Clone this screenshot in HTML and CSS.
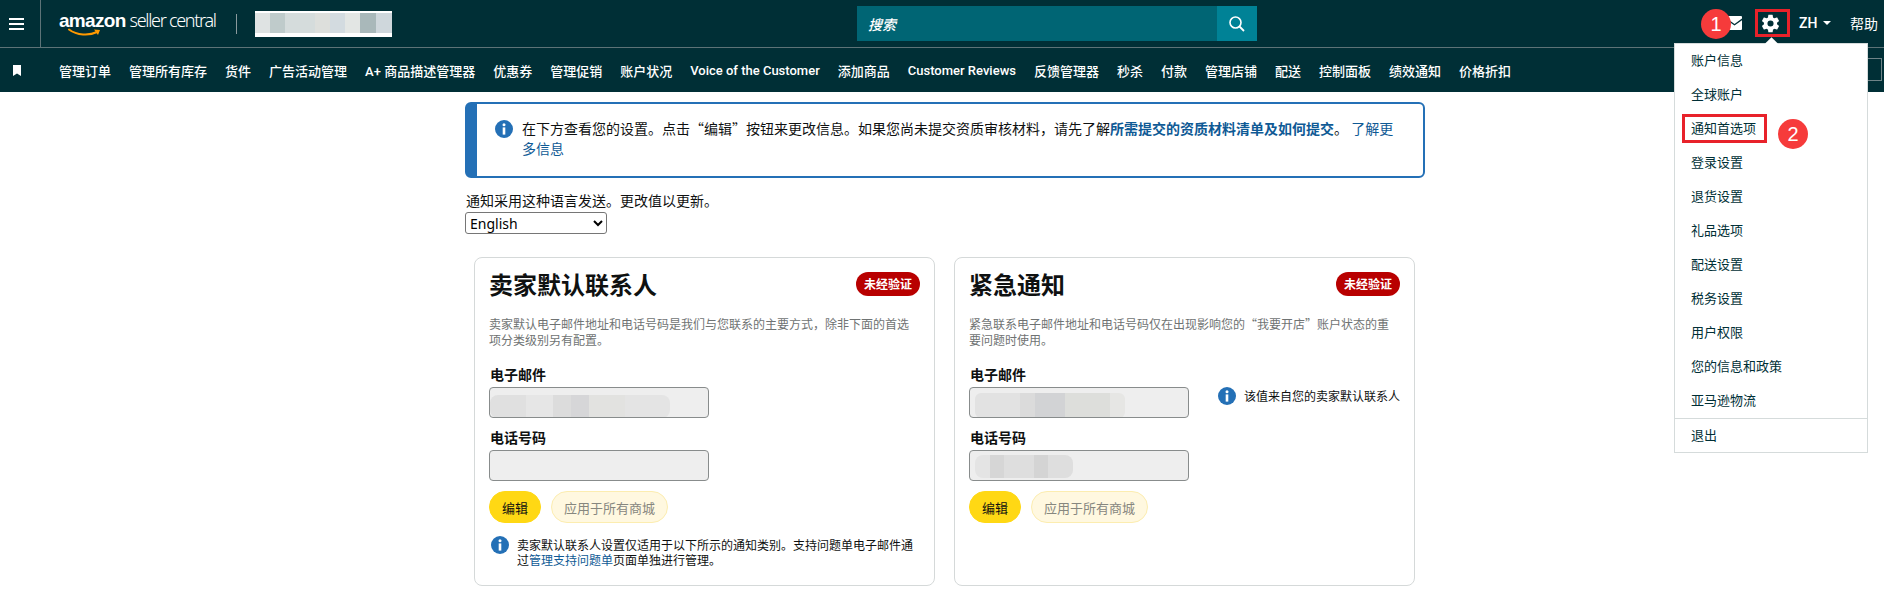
FILE: index.html
```html
<!DOCTYPE html>
<html lang="zh">
<head>
<meta charset="utf-8">
<title>通知首选项</title>
<link rel="stylesheet" href="styles.css">
</head>
<body>
<header class="head">
  <div class="topbar">
    <div class="burger"><span></span><span></span><span></span></div>
    <div class="logo">
      <span class="logo-a">amazon</span><span class="logo-b">seller central</span>
      <svg class="smile" viewBox="0 0 34 9" width="34" height="9"><path d="M1 1.5C9 7.5 21 8 29 4" fill="none" stroke="#f90" stroke-width="2" stroke-linecap="round"/><path d="M26 1.5l6 .5-2 5z" fill="#f90"/></svg>
    </div>
    <div class="logo-sep"></div>
    <div class="acct-blur"></div>
    <div class="search">
      <span class="search-text">搜索</span>
      <span class="search-btn"><svg viewBox="0 0 18 18" width="18" height="18"><circle cx="7.5" cy="7.5" r="5.5" fill="none" stroke="#fff" stroke-width="1.6"/><path d="M11.5 11.5L16 16" stroke="#fff" stroke-width="1.8"/></svg></span>
    </div>
    <div class="tools">
      <svg class="mail" viewBox="0 0 15 14" width="15" height="14"><path d="M1 0h13a1 1 0 0 1 1 1v1.5L7.5 8 0 2.5V1a1 1 0 0 1 1-1z" fill="#fff"/><path d="M0 4.2l7.5 5.4L15 4.2V13a1 1 0 0 1-1 1H1a1 1 0 0 1-1-1z" fill="#fff"/></svg>
      <svg class="gear" viewBox="0 0 24 24" width="21" height="21"><path fill="#fff" d="M19.43 12.98c.04-.32.07-.64.07-.98s-.03-.66-.07-.98l2.11-1.65c.19-.15.24-.42.12-.64l-2-3.46c-.12-.22-.39-.3-.61-.22l-2.49 1c-.52-.4-1.08-.73-1.69-.98l-.38-2.65A.49.49 0 0 0 14 2h-4c-.25 0-.46.18-.49.42l-.38 2.65c-.61.25-1.17.59-1.69.98l-2.49-1c-.23-.09-.49 0-.61.22l-2 3.46c-.13.22-.07.49.12.64l2.11 1.65c-.04.32-.07.65-.07.98s.03.66.07.98l-2.11 1.65c-.19.15-.24.42-.12.64l2 3.46c.12.22.39.3.61.22l2.49-1c.52.4 1.08.73 1.69.98l.38 2.65c.03.24.24.42.49.42h4c.25 0 .46-.18.49-.42l.38-2.65c.61-.25 1.17-.59 1.69-.98l2.49 1c.23.09.49 0 .61-.22l2-3.46c.12-.22.07-.49-.12-.64l-2.11-1.65zM12 15.5a3.5 3.5 0 1 1 0-7 3.5 3.5 0 0 1 0 7z"/></svg>
      <span class="lang">ZH</span><span class="caret"></span>
      <span class="help">帮助</span>
    </div>
  </div>
  <nav class="navbar">
    <svg class="bookmark" viewBox="0 0 8 11" width="8" height="11"><path d="M0 0h8v11L4 8.4 0 11z" fill="#fff"/></svg>
    <a>管理订单</a><a>管理所有库存</a><a>货件</a><a>广告活动管理</a><a>A+ 商品描述管理器</a><a>优惠券</a><a>管理促销</a><a>账户状况</a><a>Voice of the Customer</a><a>添加商品</a><a>Customer Reviews</a><a>反馈管理器</a><a>秒杀</a><a>付款</a><a>管理店铺</a><a>配送</a><a>控制面板</a><a>绩效通知</a><a>价格折扣</a>
    <span class="nav-edit"></span>
  </nav>
</header>

<main class="main">
  <div class="alert">
    <svg class="info" viewBox="0 0 18 18" width="18" height="18"><circle cx="9" cy="9" r="9" fill="#2470b6"/><circle cx="9" cy="4.8" r="1.5" fill="#fff"/><rect x="7.7" y="7.4" width="2.6" height="7.2" fill="#fff"/></svg>
    <p class="alert-text">在下方查看您的设置。点击“编辑”按钮来更改信息。如果您尚未提交资质审核材料，请先了解<a class="link strong">所需提交的资质材料清单及如何提交</a>。 <a class="link">了解更多信息</a></p>
  </div>
  <p class="lang-note">通知采用这种语言发送。更改值以更新。</p>
  <select class="lang-select"><option>English</option></select>

  <div class="cards">
    <section class="card">
      <div class="card-head"><h2 class="card-title">卖家默认联系人</h2><span class="badge">未经验证</span></div>
      <p class="card-desc">卖家默认电子邮件地址和电话号码是我们与您联系的主要方式，除非下面的首选项分类级别另有配置。</p>
      <div class="label">电子邮件</div>
      <div class="field-row"><div class="input"><span class="mosaic mosaic-wide"></span></div></div>
      <div class="label label-next">电话号码</div>
      <div class="field-row"><div class="input"></div></div>
      <div class="actions"><button class="btn btn-edit">编辑</button><button class="btn btn-apply">应用于所有商城</button></div>
      <div class="note">
        <svg class="info" viewBox="0 0 18 18" width="18" height="18"><circle cx="9" cy="9" r="9" fill="#2470b6"/><circle cx="9" cy="4.8" r="1.5" fill="#fff"/><rect x="7.7" y="7.4" width="2.6" height="7.2" fill="#fff"/></svg>
        <p class="note-text">卖家默认联系人设置仅适用于以下所示的通知类别。支持问题单电子邮件通过<a class="link">管理支持问题单</a>页面单独进行管理。</p>
      </div>
    </section>
    <section class="card">
      <div class="card-head"><h2 class="card-title">紧急通知</h2><span class="badge">未经验证</span></div>
      <p class="card-desc">紧急联系电子邮件地址和电话号码仅在出现影响您的“我要开店”账户状态的重要问题时使用。</p>
      <div class="label">电子邮件</div>
      <div class="field-row">
        <div class="input"><span class="mosaic mosaic-mid"></span></div>
        <div class="side-note">
          <svg class="info" viewBox="0 0 18 18" width="18" height="18"><circle cx="9" cy="9" r="9" fill="#2470b6"/><circle cx="9" cy="4.8" r="1.5" fill="#fff"/><rect x="7.7" y="7.4" width="2.6" height="7.2" fill="#fff"/></svg>
          <span class="side-text">该值来自您的卖家默认联系人</span>
        </div>
      </div>
      <div class="label label-next">电话号码</div>
      <div class="field-row"><div class="input"><span class="mosaic mosaic-short"></span></div></div>
      <div class="actions"><button class="btn btn-edit">编辑</button><button class="btn btn-apply">应用于所有商城</button></div>
    </section>
  </div>
</main>

<div class="menu">
  <a>账户信息</a><a>全球账户</a><a>通知首选项</a><a>登录设置</a><a>退货设置</a><a>礼品选项</a><a>配送设置</a><a>税务设置</a><a>用户权限</a><a>您的信息和政策</a><a>亚马逊物流</a>
  <a class="menu-last">退出</a>
</div>
<div class="mark mark-gear"></div>
<div class="mark mark-item"></div>
<div class="step step-1">1</div>
<div class="step step-2">2</div>
</body>
</html>
```
FILE: styles.css
```css
* { box-sizing: border-box; }
html, body { margin: 0; height: 596px; overflow: hidden; }
body { background: #fff; color: #0f1111; font-family: "Noto Sans CJK SC", "Liberation Sans", sans-serif; font-size: 14px; }
p, h2 { margin: 0; }

.head { background: #002f36; color: #fff; height: 92px; }
.topbar { height: 48px; display: flex; align-items: center; border-bottom: 1px solid #5d7377; }
.burger { width: 41px; height: 47px; border-right: 1px solid #5d7377; display: flex; flex-direction: column; justify-content: center; gap: 3px; padding-left: 9px; flex: none; }
.burger span { display: block; width: 15px; height: 2px; background: #fff; }
.logo { position: relative; margin-left: 18px; width: 160px; height: 34px; white-space: nowrap; font-family: "Liberation Sans", sans-serif; line-height: 26px; flex: none; }
.logo-a { font-size: 19px; font-weight: 700; letter-spacing: -.7px; }
.logo-b { font-size: 18px; font-family: "Noto Sans", sans-serif; font-weight: 300; letter-spacing: -1.3px; margin-left: 4px; }
.smile { position: absolute; left: 9px; top: 21px; }
.logo-sep { width: 1px; height: 20px; background: #8a9a9d; margin: 0 18px 0 17px; flex: none; }
.acct-blur { width: 137px; height: 26px; flex: none; background: linear-gradient(90deg, #dfe3e3 0 11%, #bfcbcb 11% 22%, #d5dcdc 22% 44%, #dddfdc 44% 55%, #d3dbe0 55% 66%, #e3e6e4 66% 77%, #a9b8ba 77% 88%, #cfd7dc 88% 100%); border-top: 2px solid #fff; border-bottom: 4px solid #fff; }
.search { margin-left: 465px; width: 400px; height: 35px; background: #006574; display: flex; align-items: center; justify-content: space-between; flex: none; }
.search-text { padding-left: 11px; font-size: 14px; font-style: italic; font-weight: 500; }
.search-btn { width: 40px; height: 35px; background: #008296; display: flex; align-items: center; justify-content: center; }
.tools { position: relative; flex: 1; height: 47px; }
.mail { position: absolute; left: 470px; top: 16px; }
.gear { position: absolute; left: 503px; top: 13px; }
.lang { position: absolute; left: 542px; top: 12px; font-family: Roboto, sans-serif; font-size: 14px; font-weight: 500; line-height: 22px; }
.caret { position: absolute; left: 566px; top: 21px; border: 4px solid transparent; border-top: 4px solid #fff; border-bottom: 0; }
.help { position: absolute; left: 593px; top: 12px; font-size: 14px; line-height: 22px; }

.navbar { height: 44px; display: flex; align-items: center; gap: 18px; padding-left: 59px; position: relative; font-family: Roboto, "Noto Sans CJK SC", sans-serif; font-size: 13px; font-weight: 500; white-space: nowrap; }
.navbar a { color: #fff; }
.bookmark { position: absolute; left: 13px; top: 17px; }
.nav-edit { position: absolute; left: 1860px; top: 10px; width: 22px; height: 23px; border: 1px solid #6f8488; }

.main { margin-left: 465px; width: 960px; padding-top: 10px; }
.alert { height: 76px; border: 2px solid #2470b6; border-left-width: 12px; border-radius: 6px; padding: 14px 20px 0 18px; display: flex; gap: 9px; align-items: flex-start; }
.info { flex: none; }
.alert .info { margin-top: 2px; }
.alert-text { line-height: 20px; font-size: 14px; }
.link { color: #0f5a95; }
.strong { font-weight: 700; }
.lang-note { margin: 12px 0 0 1px; line-height: 20px; }
.lang-select { display: block; margin-top: 2px; width: 142px; height: 22px; font-family: "Noto Sans", "Liberation Sans", sans-serif; font-size: 14px; color: #000; background: #fff; border: 1px solid #767676; border-radius: 3px; }

.cards { display: flex; gap: 19px; margin: 23px 0 0 9px; }
.card { width: 461px; height: 329px; border: 1px solid #d5d9d9; border-radius: 8px; padding: 14px 14px 0; }
.card-head { display: flex; justify-content: space-between; align-items: flex-start; }
.card-title { font-size: 24px; line-height: 24px; font-weight: 700; }
.badge { width: 64px; height: 24px; border-radius: 12px; background: #b80000; color: #fff; font-size: 12px; font-weight: 700; line-height: 24px; text-align: center; }
.card-desc { margin-top: 20px; font-size: 12px; line-height: 16px; color: #6f7373; }
.label { margin-top: 16px; margin-bottom: 3px; padding-left: 1px; font-size: 14px; font-weight: 700; line-height: 20px; }
.label-next { margin-top: 9px; }
.field-row { display: flex; }
.input { width: 220px; height: 31px; background: #eee; border: 1px solid #888c8c; border-radius: 4px; flex: none; position: relative; overflow: hidden; }
.mosaic { display: block; position: absolute; left: 0; }
.mosaic-wide { top: 7px; width: 180px; height: 23px; border-radius: 8px; background: linear-gradient(90deg, #e0e0e0 0 20%, #e6e6e6 20% 35%, #dcdcdc 35% 45%, #d6d6d8 45% 55%, #e2e2e0 55% 75%, #e4e4e4 75% 100%); }
.mosaic-mid { top: 5px; left: 5px; width: 150px; height: 25px; border-radius: 6px; background: linear-gradient(90deg, #e2e2e2 0 30%, #dbdbdb 30% 40%, #d2d3d5 40% 60%, #dddedb 60% 90%, #e6e6e4 90% 100%); }
.mosaic-short { top: 4px; left: 5px; width: 98px; height: 23px; border-radius: 8px; background: linear-gradient(90deg, #e4e4e4 0 15%, #d6d6d6 15% 30%, #dedede 30% 60%, #d4d4d4 60% 75%, #dedede 75% 100%); }
.actions { display: flex; gap: 10px; margin-top: 10px; }
.btn { height: 32px; border-radius: 16px; font-family: inherit; font-size: 13px; padding: 0; }
.btn-edit { width: 52px; background: #ffd814; border: 1px solid #ffd814; color: #0f1111; }
.btn-apply { width: 117px; background: #fff8e0; border: 1px solid #fcedb0; color: #87877f; }
.note { display: flex; gap: 8px; margin-top: 15px; padding-left: 2px; }
.note .info { margin-top: -2px; }
.note-text { font-size: 12px; line-height: 14.5px; }
.side-note { display: flex; gap: 8px; margin-left: 29px; font-size: 12px; line-height: 18px; white-space: nowrap; }

.menu { position: absolute; left: 1674px; top: 43px; width: 194px; height: 410px; background: #fff; border: 1px solid #d5dbdb; font-size: 13px; color: #002f36; display: flex; flex-direction: column; }
.menu::before { content: ""; position: absolute; left: 92px; top: -5px; width: 9px; height: 9px; background: #fff; transform: rotate(45deg); }
.menu a { position: relative; height: 34px; line-height: 32px; padding-left: 16px; flex: none; }
.menu .menu-last { border-top: 1px solid #d5dbdb; }
.mark { position: absolute; border: 3px solid #e8222a; }
.mark-gear { left: 1755px; top: 9px; width: 35px; height: 28px; }
.mark-item { left: 1682px; top: 114px; width: 85px; height: 29px; }
.step { position: absolute; width: 30px; height: 30px; border-radius: 50%; background: #f63b3b; color: #fff; font-family: "Liberation Sans", sans-serif; font-size: 20px; line-height: 30px; text-align: center; }
.step-1 { left: 1701px; top: 9px; }
.step-2 { left: 1778px; top: 119px; }
```
